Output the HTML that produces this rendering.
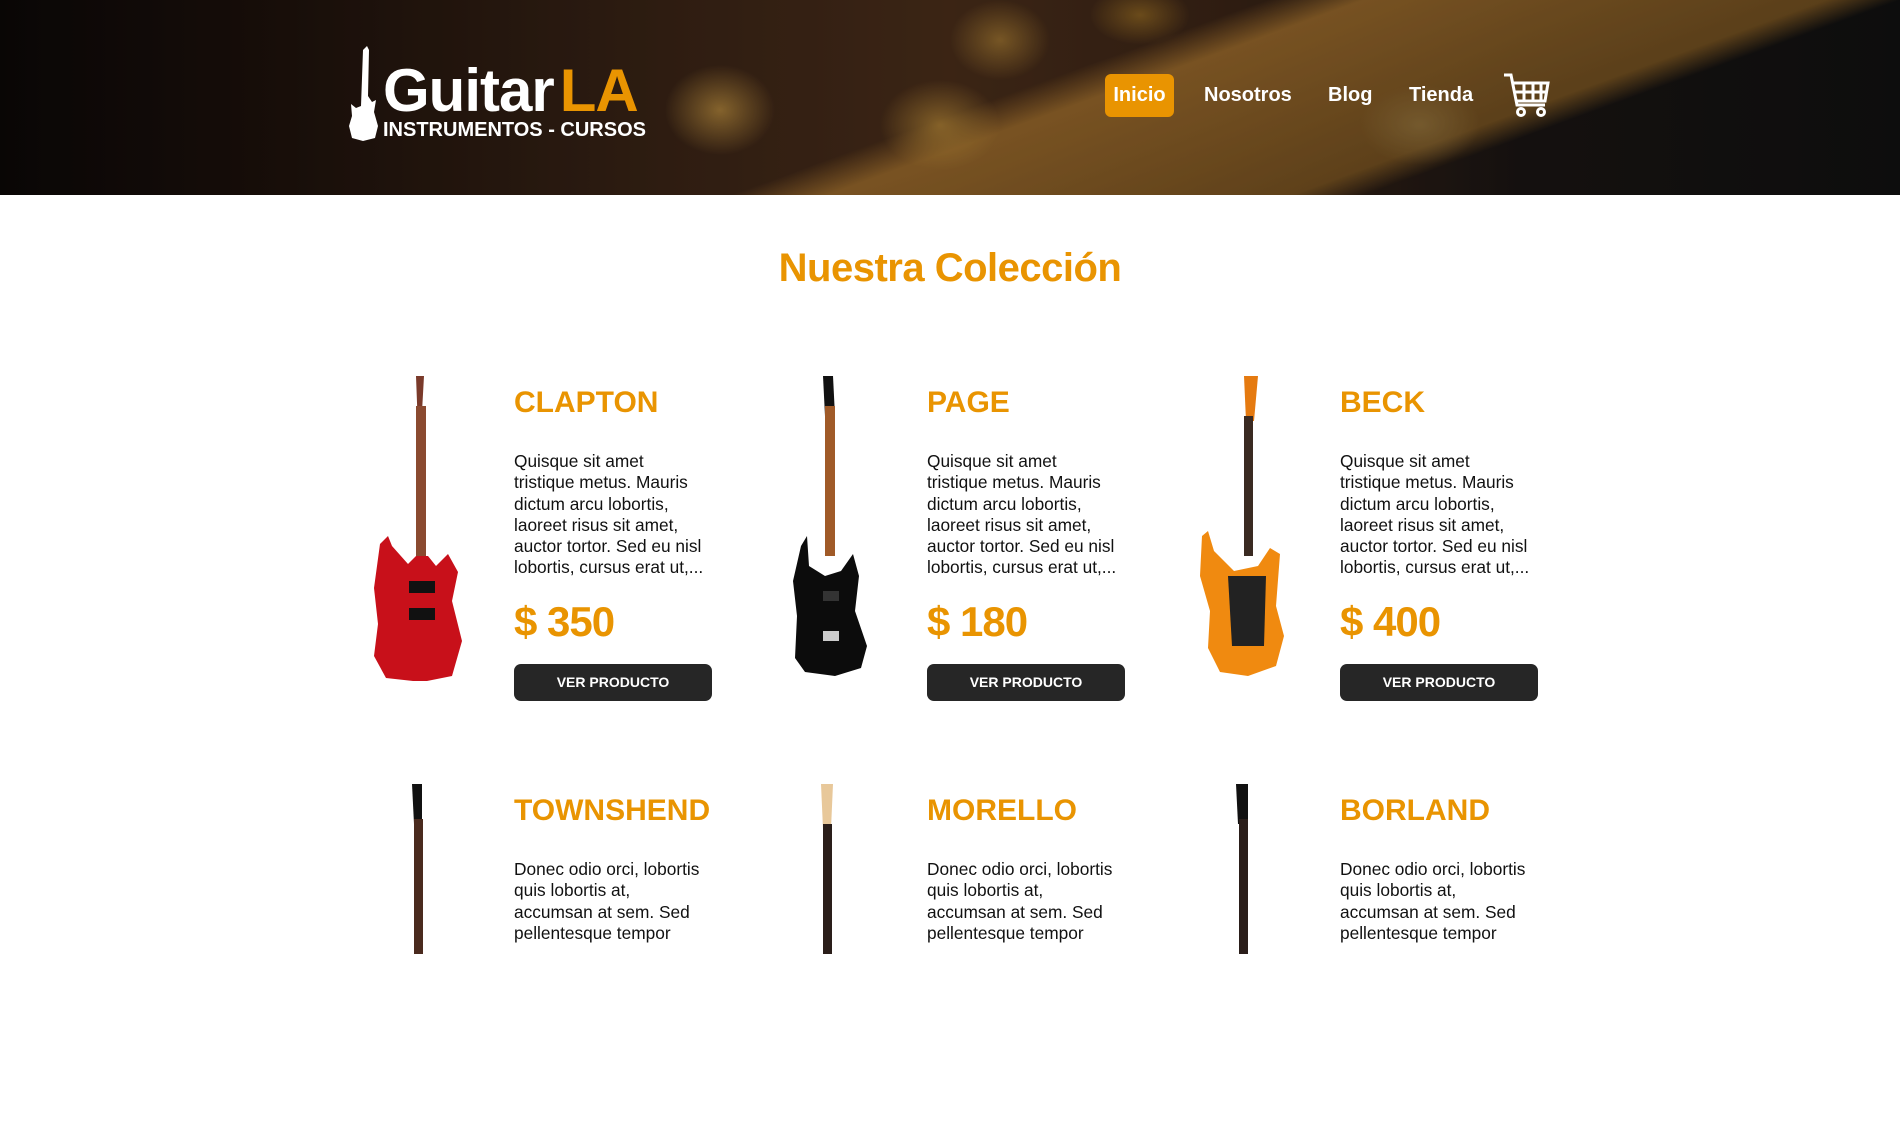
<!DOCTYPE html>
<html><head><meta charset="utf-8">
<style>
*{margin:0;padding:0;box-sizing:border-box}
body{width:1900px;height:947px;overflow:hidden;background:#fff;font-family:"Liberation Sans",sans-serif;position:relative}
.hdr{position:absolute;left:0;top:0;width:1900px;height:195px;overflow:hidden;
background:
radial-gradient(ellipse 55px 45px at 720px 110px,rgba(210,160,70,.7),transparent),
radial-gradient(ellipse 60px 45px at 940px 125px,rgba(200,150,60,.7),transparent),
radial-gradient(ellipse 50px 40px at 1000px 40px,rgba(200,150,60,.6),transparent),
radial-gradient(ellipse 60px 40px at 1420px 125px,rgba(170,140,80,.5),transparent),
radial-gradient(ellipse 50px 30px at 1140px 15px,rgba(180,130,40,.6),transparent),
linear-gradient(160deg,transparent 52%,rgba(160,110,45,.9) 56%,rgba(130,90,35,.85) 75%,transparent 78%),
linear-gradient(90deg,#0c0807 0%,#1e120c 15%,#3a2416 35%,#4a2e1a 50%,#3a2416 65%,#1a1513 80%,#111 100%);}
.hdr:after{content:"";position:absolute;inset:0;background:rgba(0,0,0,.2)}
.logo{position:absolute;left:348px;top:46px;z-index:2}
.lt{position:absolute;left:383px;top:56px;z-index:2;font-weight:bold;font-size:60px;color:#fff;letter-spacing:-1px;line-height:70px}
.lt span{color:#e99401;margin-left:6px}
.ls{position:absolute;left:383px;top:119px;z-index:2;font-weight:bold;font-size:20px;color:#fff;}
.nav{position:absolute;z-index:2;color:#fff;font-weight:bold;font-size:20px;top:84px}
.ini{position:absolute;z-index:2;left:1105px;top:74px;width:69px;height:43px;background:#e99401;border-radius:6px;color:#fff;font-weight:bold;font-size:20px;text-align:center;line-height:43px}
h1{position:absolute;left:0;width:1900px;top:246px;text-align:center;color:#e99401;font-size:40px;font-weight:bold;letter-spacing:-.5px}
.card{position:absolute;width:420px;height:340px}
.card svg{position:absolute;left:0;top:0}
.nm{position:absolute;left:142px;top:10px;color:#e99401;font-weight:bold;font-size:30px}
.ds{position:absolute;left:142px;top:75px;width:230px;font-size:17.3px;line-height:21.3px;color:#111;white-space:nowrap}
.pr{position:absolute;left:142px;top:222px;color:#e99401;font-weight:bold;font-size:42px;letter-spacing:-1px}
.bt{position:absolute;left:142px;top:288px;width:198px;height:37px;background:#262626;border-radius:7px;color:#fff;font-weight:bold;font-size:14px;text-align:center;line-height:37px}
</style></head><body>
<div class="hdr"></div>
<svg class="logo" width="32" height="95" viewBox="0 0 32 95"><path d="M19 0 L21 4 L20 50 L24 56 L28 54 L26 66 L30 80 L27 92 L15 95 L4 92 L1 80 L4 70 L3 58 L8 62 L13 60 L15 4 Z" fill="#fff"/></svg>
<div class="lt">Guitar<span>LA</span></div>
<div class="ls">INSTRUMENTOS - CURSOS</div>
<div class="ini">Inicio</div>
<div class="nav" style="left:1204px">Nosotros</div>
<div class="nav" style="left:1328px">Blog</div>
<div class="nav" style="left:1409px">Tienda</div>
<svg style="position:absolute;left:1503px;top:73px;z-index:2" width="48" height="46" viewBox="0 0 48 46" fill="none" stroke="#fff" stroke-width="3"><path d="M1 2 H8 L14 32 H42"/><path d="M10 10 H45 L42 28 H13"/><path d="M21 10 V28 M30 10 V28 M38 10 V28 M11 19 H44"/><circle cx="18" cy="39" r="3.5"/><circle cx="38" cy="39" r="3.5"/></svg>
<h1>Nuestra Colección</h1>

<div class="card" style="left:372px;top:376px"><svg width="100" height="305" viewBox="0 0 100 305"><path d="M44 0 L52 0 L50 36 L50 160 Z" fill="#7a3a2a"/><rect x="44" y="30" width="10" height="150" fill="#8a4a30"/><path d="M16 160 L20 170 L36 188 L44 180 L56 180 L64 190 L76 178 L86 196 L80 225 L90 265 L80 300 L50 306 L14 302 L2 280 L6 248 L2 212 L8 168 Z" fill="#c8101a"/><rect x="37" y="205" width="26" height="12" fill="#111"/><rect x="37" y="232" width="26" height="12" fill="#111"/></svg><div class="nm">CLAPTON</div><div class="ds">Quisque sit amet<br>tristique metus. Mauris<br>dictum arcu lobortis,<br>laoreet risus sit amet,<br>auctor tortor. Sed eu nisl<br>lobortis, cursus erat ut,...</div><div class="pr">$ 350</div><div class="bt">VER PRODUCTO</div></div>

<div class="card" style="left:785px;top:376px"><svg width="100" height="305" viewBox="0 0 100 305"><path d="M38 0 L48 0 L50 40 L40 40 Z" fill="#111"/><rect x="40" y="30" width="10" height="150" fill="#a05a28"/><path d="M22 160 L24 190 L40 200 L56 195 L68 178 L74 200 L70 235 L82 270 L76 292 L50 300 L20 296 L10 282 L12 240 L8 205 L16 170 Z" fill="#0c0c0c"/><rect x="38" y="215" width="16" height="10" fill="#333"/><rect x="38" y="255" width="16" height="10" fill="#ccc"/></svg><div class="nm">PAGE</div><div class="ds">Quisque sit amet<br>tristique metus. Mauris<br>dictum arcu lobortis,<br>laoreet risus sit amet,<br>auctor tortor. Sed eu nisl<br>lobortis, cursus erat ut,...</div><div class="pr">$ 180</div><div class="bt">VER PRODUCTO</div></div>

<div class="card" style="left:1198px;top:376px"><svg width="100" height="305" viewBox="0 0 100 305"><path d="M46 0 L60 0 L56 45 L48 45 Z" fill="#e57a10"/><rect x="46" y="40" width="9" height="140" fill="#3a2a22"/><path d="M10 155 L16 175 L36 195 L60 190 L72 172 L82 178 L78 230 L86 260 L78 290 L50 300 L22 296 L10 272 L12 235 L2 200 L4 160 Z" fill="#f08a10"/><path d="M30 200 L68 200 L66 270 L34 270 Z" fill="#222"/></svg><div class="nm">BECK</div><div class="ds">Quisque sit amet<br>tristique metus. Mauris<br>dictum arcu lobortis,<br>laoreet risus sit amet,<br>auctor tortor. Sed eu nisl<br>lobortis, cursus erat ut,...</div><div class="pr">$ 400</div><div class="bt">VER PRODUCTO</div></div>

<div class="card" style="left:372px;top:784px"><svg width="100" height="170" viewBox="0 0 100 170"><path d="M40 0 L50 0 L50 40 L42 40 Z" fill="#111"/><rect x="42" y="35" width="9" height="135" fill="#4a2a1e"/></svg><div class="nm">TOWNSHEND</div><div class="ds">Donec odio orci, lobortis<br>quis lobortis at,<br>accumsan at sem. Sed<br>pellentesque tempor</div></div>
<div class="card" style="left:785px;top:784px"><svg width="100" height="170" viewBox="0 0 100 170"><path d="M36 0 L48 0 L46 45 L38 45 Z" fill="#e8c89a"/><rect x="38" y="40" width="9" height="130" fill="#2a1e1a"/></svg><div class="nm">MORELLO</div><div class="ds">Donec odio orci, lobortis<br>quis lobortis at,<br>accumsan at sem. Sed<br>pellentesque tempor</div></div>
<div class="card" style="left:1198px;top:784px"><svg width="100" height="170" viewBox="0 0 100 170"><path d="M38 0 L50 0 L50 40 L40 40 Z" fill="#111"/><rect x="41" y="35" width="9" height="135" fill="#2a1e1a"/></svg><div class="nm">BORLAND</div><div class="ds">Donec odio orci, lobortis<br>quis lobortis at,<br>accumsan at sem. Sed<br>pellentesque tempor</div></div>
</body></html>
